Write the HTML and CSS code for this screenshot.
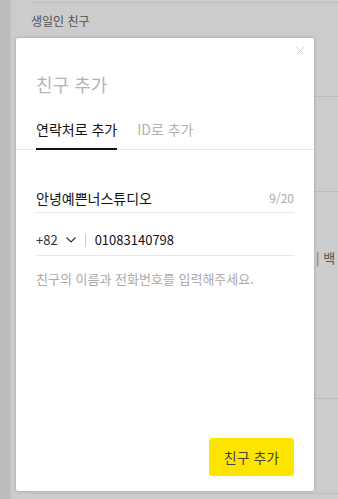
FILE: index.html
```html
<!DOCTYPE html>
<html lang="ko">
<head>
  <meta charset="UTF-8">
  <title>친구 추가</title>
  <link rel="stylesheet" href="styles.css">
</head>
<body>

  <!-- 뒤쪽 친구 목록 화면 -->
  <div class="app">
    <div class="side"></div>
    <div class="main">
      <div class="section">
        <div class="section-title">생일인 친구</div>
        <div class="friend-row row-short"></div>
        <div class="friend-row row-mid"></div>
        <div class="friend-row row-tall">
          <span class="row-meta"><span class="bar">|</span> 백</span>
        </div>
        <div class="friend-row row-mid"></div>
      </div>
    </div>
  </div>

  <!-- 어두운 배경 -->
  <div class="dim"></div>

  <!-- 친구 추가 팝업 -->
  <div class="modal">
    <button class="close-btn" aria-label="닫기">
      <svg width="9" height="9" viewBox="0 0 9 9">
        <path d="M0.5 0.5 L8.5 8.5 M8.5 0.5 L0.5 8.5" stroke="#cfcfcf" stroke-width="1" fill="none"/>
      </svg>
    </button>

    <h2 class="modal-title">친구 추가</h2>

    <div class="tabs">
      <div class="tab active">연락처로 추가</div>
      <div class="tab">ID로 추가</div>
    </div>

    <div class="form">
      <div class="field">
        <span class="field-value name">안녕예쁜너스튜디오</span>
        <span class="counter">9/20</span>
      </div>
      <div class="field phone">
        <span class="country">+82</span>
        <svg class="chevron" width="10" height="6" viewBox="0 0 10 6">
          <path d="M0.5 0.5 L5 5 L9.5 0.5" stroke="#333" stroke-width="1.2" fill="none"/>
        </svg>
        <span class="divider"></span>
        <span class="field-value">01083140798</span>
      </div>
      <p class="hint">친구의 이름과 전화번호를 입력해주세요.</p>
    </div>

    <div class="modal-footer">
      <button class="add-btn">친구 추가</button>
    </div>
  </div>

</body>
</html>
```

FILE: styles.css
```css
body {
  font-family: "Noto Sans CJK KR", "Noto Sans", sans-serif;
  margin: 0;
  background-color: #fff;
  color: #222;
  overflow: hidden;
  width: 338px;
  height: 499px;
  position: relative;
}
/* 뒤쪽 화면 */
.app {
  display: flex;
  height: 499px;
}
.side {
  width: 10px;
  background-color: #ececec;
  border-right: 1px solid #f4f4f4;
}
.main {
  flex: 1;
  padding-left: 20px;
}
.section {
  margin-top: 2px;
  border-top: 1px solid #ececec;
}
.section-title {
  font-size: 12px;
  line-height: 16px;
  color: #666;
  padding-top: 10px;
}
.friend-row {
  border-bottom: 1px solid #ececec;
  position: relative;
}
.row-short {
  height: 67px;
}
.row-mid {
  height: 94px;
}
.row-tall {
  height: 206px;
}
.row-meta {
  position: absolute;
  left: 285px;
  top: 56px;
  font-size: 13px;
  line-height: 20px;
  color: #6a6a6a;
  white-space: nowrap;
}
.bar {
  color: #d8823f;
}
/* 어두운 배경 */
.dim {
  position: absolute;
  inset: 0;
  background-color: rgba(0,0,0,0.2);
}
/* 팝업 */
.modal {
  position: absolute;
  left: 16px;
  top: 38px;
  width: 298px;
  height: 453px;
  background: #fff;
  border-radius: 2px;
  box-shadow: 0 0 3px rgba(0,0,0,0.25);
  display: flex;
  flex-direction: column;
}
.close-btn {
  position: absolute;
  top: 8px;
  right: 9px;
  width: 9px;
  height: 9px;
  padding: 0;
  border: none;
  background: none;
  display: flex;
}
.modal-title {
  margin: 0;
  padding: 34px 20px 0;
  font-size: 18px;
  line-height: 24px;
  font-weight: normal;
  color: #b4b4b4;
}
.tabs {
  display: flex;
  gap: 20px;
  padding: 0 20px;
  margin-top: 24px;
  border-bottom: 1px solid #e8e8e8;
}
.tab {
  font-size: 14px;
  line-height: 19px;
  padding-bottom: 10px;
  color: #b0b0b0;
}
.tab.active {
  color: #111;
  border-bottom: 2px solid #111;
  margin-bottom: -1px;
  padding-bottom: 9px;
}
.form {
  padding: 0 20px;
  margin-top: 38px;
}
.field {
  display: flex;
  align-items: center;
  border-bottom: 1px solid #e8e8e8;
  padding-bottom: 4px;
  font-size: 13px;
  line-height: 20px;
}
.field-value {
  flex: 1;
  color: #111;
}
.name {
  font-size: 14px;
}
.counter {
  font-size: 12px;
  color: #aaa;
}
.phone {
  margin-top: 17px;
  padding-bottom: 5px;
}
.country {
  color: #333;
}
.chevron {
  margin-left: 8px;
}
.divider {
  width: 1px;
  height: 13px;
  background-color: #ccc;
  margin: 0 9px;
}
.hint {
  margin: 14px 0 0;
  font-size: 13px;
  line-height: 18px;
  color: #aaa;
}
.modal-footer {
  margin-top: auto;
  padding: 0 20px 15px;
  display: flex;
  justify-content: flex-end;
}
.add-btn {
  width: 85px;
  height: 38px;
  border: none;
  border-radius: 3px;
  background-color: #fee500;
  color: #444;
  font-family: inherit;
  font-size: 14px;
  padding: 0;
}
```
